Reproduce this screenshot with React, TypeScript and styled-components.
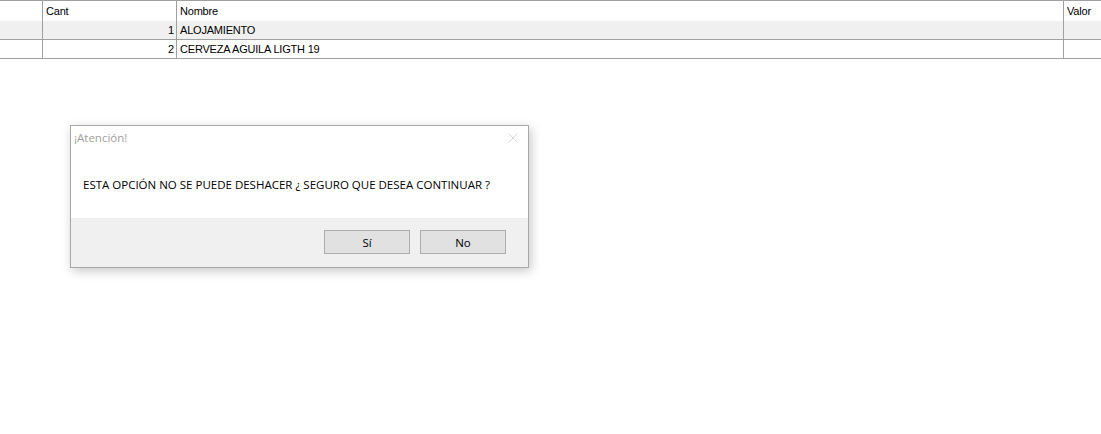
import React from "react";
import styled, { createGlobalStyle } from "styled-components";

const Global = createGlobalStyle`
  html, body { margin: 0; padding: 0; background: #fff; }
  body { width: 1101px; height: 434px; overflow: hidden; position: relative; }
`;

const Page = styled.div`
  position: relative;
  width: 1101px;
  height: 434px;
  background: #fff;
`;

const Grid = styled.div`
  border-top: 1px solid #a0a0a0;
  display: flex;
  flex-direction: column;
  font-family: "Liberation Sans", Arial, sans-serif;
  font-size: 11px;
  color: #000;
`;

const Row = styled.div<{ $kind: "head" | "alt" | "plain" }>`
  display: grid;
  grid-template-columns: 43px 134px 887px 1fr;
  height: ${(p) => (p.$kind === "head" ? "20px" : "18px")};
  background: ${(p) => (p.$kind === "alt" ? "#f0f0f0" : "#fff")};
  border-bottom: ${(p) => (p.$kind === "head" ? "none" : "1px solid #a0a0a0")};
`;

const Cell = styled.div<{ $align?: "left" | "right"; $last?: boolean }>`
  border-right: ${(p) => (p.$last ? "none" : "1px solid #a0a0a0")};
  display: flex;
  align-items: center;
  justify-content: ${(p) => (p.$align === "right" ? "flex-end" : "flex-start")};
  padding: ${(p) => (p.$align === "right" ? "0 2px 0 0" : "0 0 0 3px")};
  white-space: nowrap;
  overflow: hidden;
  letter-spacing: -0.2px;
`;

const Dialog = styled.div`
  position: absolute;
  left: 70px;
  top: 125px;
  width: 457px;
  height: 141px;
  border: 1px solid #a8a8a8;
  background: #fff;
  box-shadow: 2px 3px 10px rgba(0, 0, 0, 0.22);
  display: flex;
  flex-direction: column;
  font-family: "Open Sans", "Noto Sans", sans-serif;
`;

const TitleBar = styled.div`
  height: 23px;
  display: flex;
  align-items: center;
  justify-content: space-between;
  padding: 0 10px 0 3px;
`;

const Title = styled.span`
  font-size: 11.5px;
  color: #a0a0a0;
`;

const Body = styled.div`
  flex: 1;
  display: flex;
  align-items: center;
  padding: 1px 0 0 12px;
  font-size: 11.5px;
  color: #000;
`;

const Footer = styled.div`
  height: 49px;
  background: #f0f0f0;
  display: flex;
  justify-content: flex-end;
  align-items: flex-start;
  gap: 10px;
  padding: 12px 22px 0 0;
  box-sizing: border-box;
`;

const Button = styled.button`
  width: 86px;
  height: 24px;
  box-sizing: border-box;
  border: 1px solid #adadad;
  background: #e1e1e1;
  font-family: "Open Sans", "Noto Sans", sans-serif;
  font-size: 11.5px;
  color: #000;
  padding: 0;
  margin: 0;
`;

const Close = styled.svg`
  display: block;
`;

export default function App() {
  return (
    <Page>
      <Global />
      <Grid>
        <Row $kind="head">
          <Cell />
          <Cell>Cant</Cell>
          <Cell>Nombre</Cell>
          <Cell $last>Valor</Cell>
        </Row>
        <Row $kind="alt">
          <Cell />
          <Cell $align="right">1</Cell>
          <Cell>ALOJAMIENTO</Cell>
          <Cell $last />
        </Row>
        <Row $kind="plain">
          <Cell />
          <Cell $align="right">2</Cell>
          <Cell>CERVEZA AGUILA LIGTH 19</Cell>
          <Cell $last />
        </Row>
      </Grid>
      <Dialog>
        <TitleBar>
          <Title>¡Atención!</Title>
          <Close width="10" height="10" viewBox="0 0 10 10">
            <path d="M0.5 0.5 L9.5 9.5 M9.5 0.5 L0.5 9.5" stroke="#d8d8d8" strokeWidth="1" />
          </Close>
        </TitleBar>
        <Body>ESTA OPCIÓN NO SE PUEDE DESHACER ¿ SEGURO QUE DESEA CONTINUAR ?</Body>
        <Footer>
          <Button>Sí</Button>
          <Button>No</Button>
        </Footer>
      </Dialog>
    </Page>
  );
}
